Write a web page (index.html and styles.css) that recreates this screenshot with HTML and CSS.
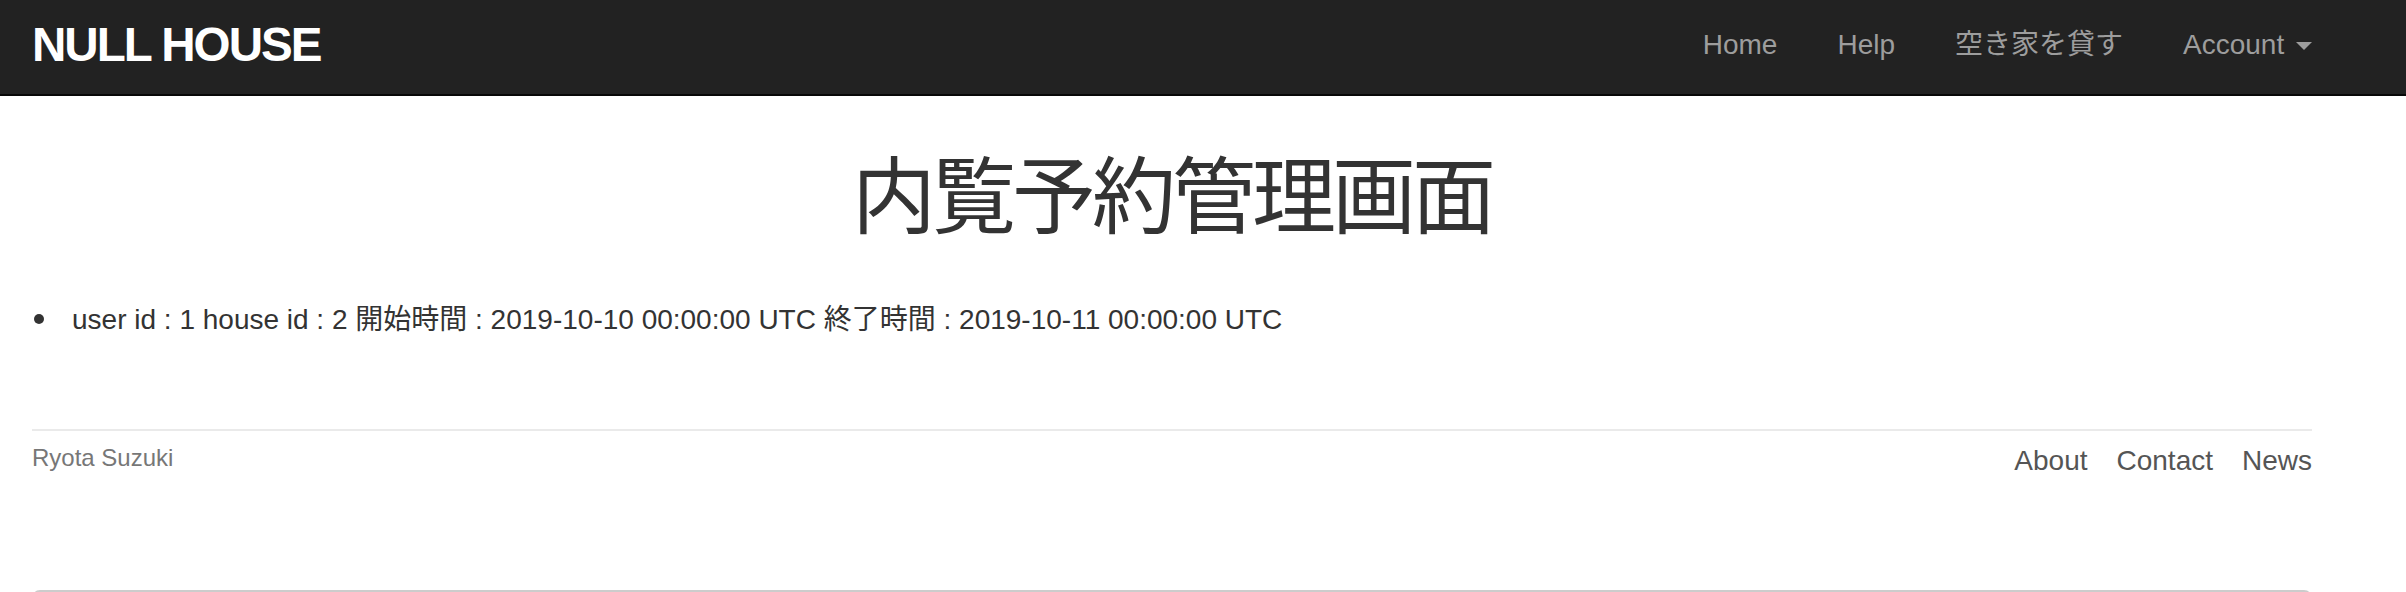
FILE: index.html
```html
<!DOCTYPE html>
<html lang="ja">
<head>
<meta charset="utf-8">
<title>NULL HOUSE</title>
<link rel="stylesheet" href="styles.css">
</head>
<body>
<header class="navbar">
  <div class="container nav-inner">
    <a class="logo" href="#">Null House</a>
    <ul class="nav">
      <li><a href="#">Home</a></li>
      <li><a href="#">Help</a></li>
      <li><a href="#">空き家を貸す</a></li>
      <li><a href="#">Account <b class="caret"></b></a></li>
    </ul>
  </div>
</header>
<div class="container main">
  <h1 class="title">内覧予約管理画面</h1>
  <ul class="reservations">
    <li>user id : 1 house id : 2 開始時間 : 2019-10-10 00:00:00 UTC 終了時間 : 2019-10-11 00:00:00 UTC</li>
  </ul>
  <footer class="footer">
    <small class="author">Ryota Suzuki</small>
    <ul class="footer-links">
      <li><a href="#">About</a></li>
      <li><a href="#">Contact</a></li>
      <li><a href="#">News</a></li>
    </ul>
  </footer>
  <pre class="debug-dump"></pre>
</div>
</body>
</html>
```
FILE: styles.css
```css
html {
  overflow: hidden;
}
body {
  margin: 0;
  font-family: "Liberation Sans", Arial, "Noto Sans CJK JP", sans-serif;
  font-size: 28px;
  line-height: 40px;
  color: #333;
  background: #fff;
}
a {
  text-decoration: none;
}
.container {
  width: 2280px;
  margin-left: 32px;
}
.navbar {
  background: #222;
  height: 94px;
  border-bottom: 2px solid #080808;
}
.nav-inner {
  height: 94px;
  display: flex;
  align-items: center;
  justify-content: space-between;
}
.logo {
  font-size: 47.6px;
  line-height: 47.6px;
  font-weight: bold;
  letter-spacing: -2px;
  text-transform: uppercase;
  color: #fff;
  margin-bottom: 5px;
}
.nav {
  display: flex;
  list-style: none;
  margin: 0 -30px 5px 0;
  padding: 0;
}
.nav a {
  display: block;
  padding: 0 30px;
  line-height: 40px;
  color: #9d9d9d;
}
.caret {
  display: inline-block;
  width: 0;
  height: 0;
  margin-left: 4px;
  vertical-align: middle;
  border-top: 8px solid #9d9d9d;
  border-left: 8px solid transparent;
  border-right: 8px solid transparent;
}
.title {
  margin: 56px 0 56px;
  font-size: 84px;
  line-height: 92.4px;
  font-weight: 400;
  letter-spacing: -4px;
  text-align: center;
  color: #333;
}
.reservations {
  margin: 0;
  padding-left: 40px;
  list-style: none;
}
.reservations li::before {
  content: "";
  display: inline-block;
  width: 10px;
  height: 10px;
  border-radius: 50%;
  background: #333;
  margin-left: -38px;
  margin-right: 28px;
  vertical-align: 5px;
}
.footer {
  margin-top: 89px;
  padding-top: 10px;
  border-top: 2px solid #eaeaea;
  display: flex;
  justify-content: space-between;
  align-items: flex-start;
  color: #777;
}
.author {
  font-size: 24px;
  line-height: 34px;
}
.footer-links {
  display: flex;
  list-style: none;
  margin: 0;
  padding: 0;
}
.footer-links li {
  margin-left: 29px;
}
.footer-links a {
  color: #555;
}
.debug-dump {
  margin: 109px 0 0;
  height: 60px;
  border: 2px solid #ccc;
  border-radius: 8px;
  background: #f5f5f5;
}
```
